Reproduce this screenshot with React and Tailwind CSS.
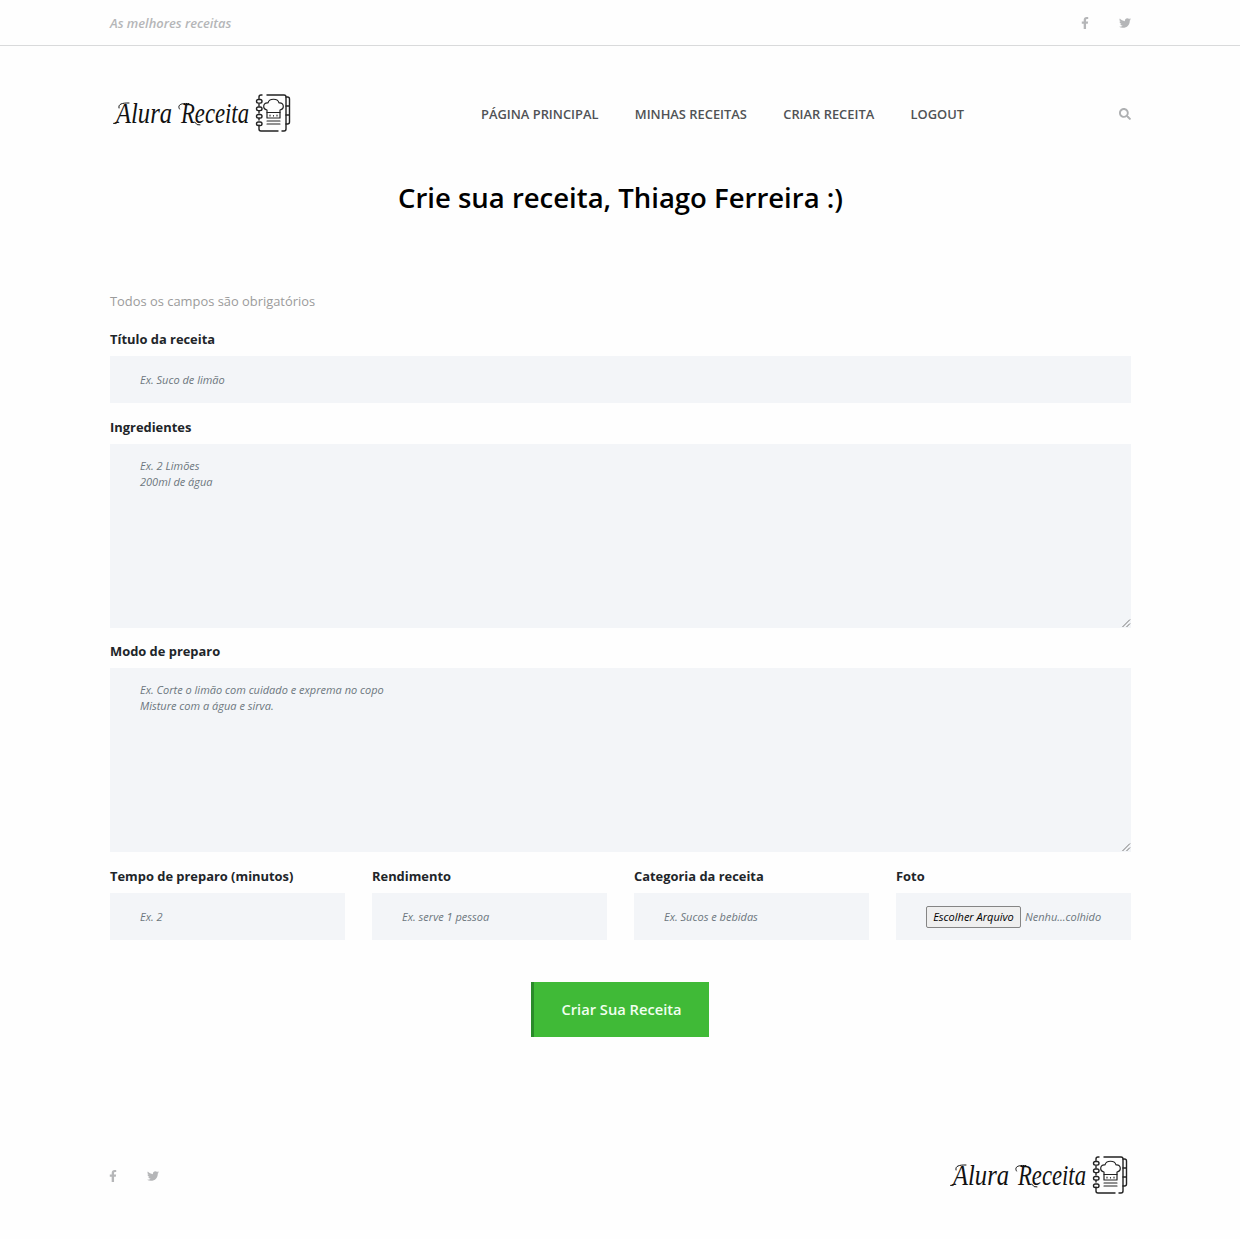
import React from "react";
import { FaFacebookF, FaTwitter, FaSearch } from "react-icons/fa";

function Logo() {
  return (
    <svg width="184" height="44" viewBox="0 0 184 44" role="img" aria-label="Alura Receita">
      <g fill="#111" fontFamily="'Liberation Serif', serif" fontStyle="italic" fontSize="29">
        <text x="6" y="30.500" textLength="56" lengthAdjust="spacingAndGlyphs">Alura</text>
        <text x="71" y="30.500" textLength="68" lengthAdjust="spacingAndGlyphs">Receita</text>
      </g>
      <g fill="none" stroke="#111" strokeWidth="1" strokeLinecap="round">
        <path d="M8 30Q6 32.500 3.500 31.500" />
        <path d="M9 16C8 12 12 10.800 19 11" />
        <path d="M69.500 17C67 13 71 10.800 79 11.600" />
        <path d="M84.500 30Q87 34 90 33" />
      </g>
      <g fill="none" stroke="#222" strokeWidth="1.4" strokeLinecap="round" strokeLinejoin="round">
        <path d="M152 3H151Q149 3 149 5V6.500M149 12V14M149 19V21M149 26V28M149 33V37Q149 39 151 39H168M172 39H174Q176 39 176 37V5Q176 3 174 3H157" />
        <rect x="146.500" y="7.500" width="5.500" height="3.600" rx="1.800" />
        <rect x="146.500" y="15" width="5.500" height="3.600" rx="1.800" />
        <rect x="146.500" y="22.500" width="5.500" height="3.600" rx="1.800" />
        <rect x="146.500" y="30" width="5.500" height="3.600" rx="1.800" />
        <path d="M176 5H177.500Q179.500 5 179.500 7V30Q179.500 32 177.500 32H176M176 14H179.500M176 23H179.500" />
        <path d="M157 18C152 17 153 10 158 11C159 6 168 6 169 11C174 10 175 17 170 18V26H157Z" strokeWidth="1.200" />
        <path d="M157 20.500H170M160 23V24M163.500 23.500V24M167 23V24M157 29H170M157 32H170" strokeWidth="1.100" />
      </g>
    </svg>
  );
}

function Label({ children }) {
  return <span className="block h-[18px] text-[12.900px] leading-[18px] font-bold text-[#212529] whitespace-nowrap">{children}</span>;
}

const field = "block w-full rounded-none bg-[#f3f5f8] px-[30px] text-[11px] italic text-[#6c757d] outline-none placeholder:text-[#6c757d]";

function Field({ label, placeholder }) {
  return (
    <label className="block">
      <Label>{label}</Label>
      <input className={`${field} mt-2 h-[47px]`} placeholder={placeholder} />
    </label>
  );
}

function Area({ label, placeholder, className }) {
  return (
    <label className={`relative block ${className}`}>
      <Label>{label}</Label>
      <textarea className={`${field} mt-2 h-[184px] resize-none pt-[14px] leading-[16.400px]`} placeholder={placeholder} />
      <svg className="absolute right-0 bottom-0" width="10" height="10" viewBox="0 0 10 10" stroke="#666" strokeWidth="0.9">
        <path d="M1.500 9L9 1.500M5.500 9L9 5.500" />
      </svg>
    </label>
  );
}

export default function App() {
  return (
    <div className="h-[1239px] overflow-hidden bg-[#fefefe] font-['Open_Sans',sans-serif]">
      <div className="h-[46px] border-b border-[#d9dadb]">
        <div className="ml-[110px] flex h-full w-[1021px] items-center justify-between text-[#b5b6b8]">
          <span className="pt-[2px] text-[12.900px] font-semibold italic">As melhores receitas</span>
          <div className="flex items-center gap-[28px] pt-px">
            <FaFacebookF size={12} />
            <FaTwitter size={12} />
          </div>
        </div>
      </div>

      <header className="ml-[110px] flex h-[135px] w-[1021px] items-center">
        <Logo />
        <nav className="ml-[187px] flex gap-[36.300px] pt-[2px] text-[12.900px] font-semibold text-[#505255]">
          <a>PÁGINA PRINCIPAL</a>
          <a>MINHAS RECEITAS</a>
          <a>CRIAR RECEITA</a>
          <a>LOGOUT</a>
        </nav>
        <FaSearch size={12} className="ml-auto text-[#aeb0b2]" />
      </header>

      <main className="ml-[110px] w-[1021px]">
        <h1 className="text-center text-[27.500px] leading-[34px] font-semibold text-black">Crie sua receita, Thiago Ferreira :)</h1>
        <p className="mt-[76px] text-[12.900px] leading-5 text-[#9b9b9b]">Todos os campos são obrigatórios</p>
        <form className="mt-[19px]">
          <Field label="Título da receita" placeholder="Ex. Suco de limão" />
          <Area className="mt-[15px]" label="Ingredientes" placeholder={"Ex. 2 Limões\n200ml de água"} />
          <Area className="mt-[14px]" label="Modo de preparo" placeholder={"Ex. Corte o limão com cuidado e exprema no copo\nMisture com a água e sirva."} />
          <div className="mt-[15px] grid grid-cols-4 gap-[27px]">
            <Field label="Tempo de preparo (minutos)" placeholder="Ex. 2" />
            <Field label="Rendimento" placeholder="Ex. serve 1 pessoa" />
            <Field label="Categoria da receita" placeholder="Ex. Sucos e bebidas" />
            <div>
              <Label>Foto</Label>
              <div className="mt-2 flex h-[47px] items-center bg-[#f3f5f8] pl-[30px] text-[11px] whitespace-nowrap italic text-[#6c757d]">
                <button type="button" className="mt-px h-[22px] w-[95px] rounded-[2px] border border-[#858585] bg-[#efefef] text-black italic">Escolher Arquivo</button>
                <span className="mt-px ml-1">Nenhu...colhido</span>
              </div>
            </div>
          </div>
          <button type="button" className="ml-[421px] mt-[42px] block h-[55px] w-[178px] border-l-[3px] border-[#2a8b2a] bg-[#40ba37] pb-px text-[14.700px] font-semibold text-[#f1fff0]">Criar Sua Receita</button>
        </form>
      </main>

      <footer className="ml-[110px] mt-[117px] flex h-[44px] w-[1021px] items-center justify-between">
        <div className="-ml-[3px] flex items-center gap-[28px] text-[#b5b6b8]">
          <FaFacebookF size={12} />
          <FaTwitter size={12} />
        </div>
        <Logo />
      </footer>
    </div>
  );
}
